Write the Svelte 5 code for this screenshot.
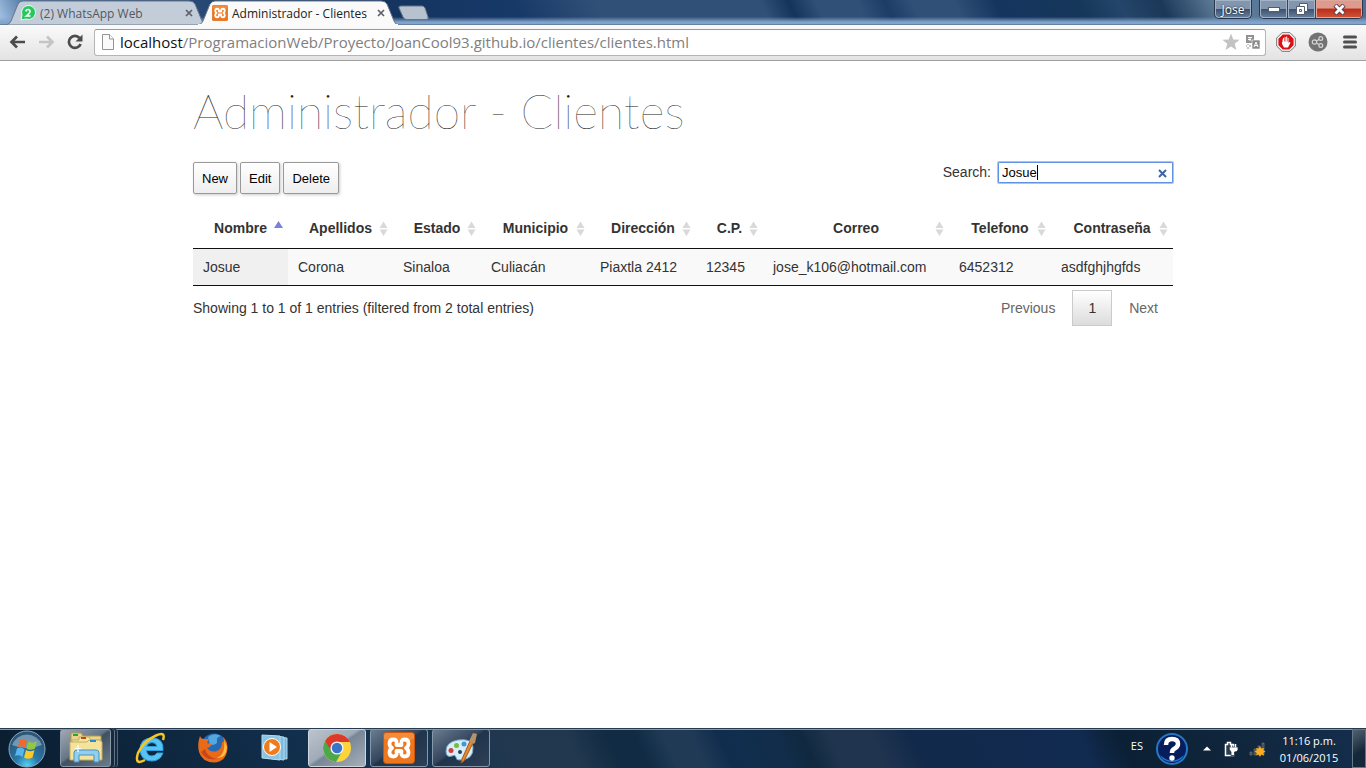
<script>
  const columns = [
    { name: 'Nombre', width: 95, value: 'Josue' },
    { name: 'Apellidos', width: 105, value: 'Corona' },
    { name: 'Estado', width: 88, value: 'Sinaloa' },
    { name: 'Municipio', width: 109, value: 'Culiacán' },
    { name: 'Dirección', width: 106, value: 'Piaxtla 2412' },
    { name: 'C.P.', width: 67, value: '12345' },
    { name: 'Correo', width: 186, value: 'jose_k106@hotmail.com' },
    { name: 'Telefono', width: 102, value: '6452312' },
    { name: 'Contraseña', width: 122, value: 'asdfghjhgfds' }
  ];
</script>

{#snippet closeGlyph()}
  <svg width="8" height="8" viewBox="0 0 8 8"><path d="M1 1L7 7M7 1L1 7" stroke="#5c6067" stroke-width="1.7" /></svg>
{/snippet}

{#snippet xampp(size)}
  <svg width={size} height={size} viewBox="0 0 32 32">
    <rect x="0.5" y="0.5" width="31" height="31" rx="3" fill="#ee761c" stroke="#c9560a" />
    <path d="M1 3Q1 1 3 1H29Q31 1 31 3V7Q16 11 1 7Z" fill="#f79a50" opacity=".6" />
    <path d="M13.500 13H18.500Q17.500 7.500 21.500 7.500Q25.500 7.500 25.500 11.500Q25.500 14.500 23 16Q25.500 17.500 25.500 20.500Q25.500 24.500 21.500 24.500Q17.500 24.500 18.500 19H13.500Q14.500 24.500 10.500 24.500Q6.500 24.500 6.500 20.500Q6.500 17.500 9 16Q6.500 14.500 6.500 11.500Q6.500 7.500 10.500 7.500Q14.500 7.500 13.500 13Z" fill="none" stroke="#fff" stroke-width="3.800" stroke-linejoin="round" />
  </svg>
{/snippet}

<div class="screen">
  <header>
    <div class="titlebar">
      <div class="tabs">
        <div class="tab">
          <svg class="shape" viewBox="0 0 200 25" preserveAspectRatio="none"><path d="M0 25Q4 24 5 21L12 4Q14 1 17 1H183Q187 1 189 4L196 21Q197 24 200 25Z" fill="#c3cdda" stroke="#66768b" /></svg>
          <svg width="16" height="16" viewBox="0 0 16 16"><path d="M1 15L2 10A7 7 0 1 1 6 14Z" fill="#25c85b" stroke="#edfbf1" /><path d="M6 6.500Q6 4.500 8 4.500T10 6.500Q10 8 6.300 11H10.500" fill="none" stroke="#fff" stroke-width="1.600" /></svg>
          <span class="tabtitle">(2) WhatsApp Web</span>
          <button aria-label="Cerrar WhatsApp Web">{@render closeGlyph()}</button>
        </div>
        <div class="tab active">
          <svg class="shape" viewBox="0 0 200 25" preserveAspectRatio="none"><path d="M0 25Q4 24 5 21L12 4Q14 1 17 1H183Q187 1 189 4L196 21Q197 24 200 25" fill="#fafafa" stroke="#66768b" /><path d="M0 25H200" stroke="#fafafa" stroke-width="2" /></svg>
          {@render xampp(16)}
          <span class="tabtitle">Administrador - Clientes</span>
          <button aria-label="Cerrar Administrador">{@render closeGlyph()}</button>
        </div>
        <button class="newtab" aria-label="Nueva pestaña"><svg width="32" height="16" viewBox="0 0 32 16"><path d="M3 1H24Q26 1 27 3L30 12Q31 14.500 28 14.500H9Q6 14.500 5 12L1 3Q0 1 3 1Z" fill="#b8c2ce" stroke="#62758e" /></svg></button>
      </div>
      <div class="wincontrols">
        <button class="user">Jose</button>
        <div class="wingroup">
          <button aria-label="Minimizar"><svg width="12" height="6" viewBox="0 0 12 6"><rect x=".5" y="1.500" width="11" height="4" fill="#fff" stroke="#525b70" /></svg></button>
          <button aria-label="Restaurar"><svg width="12" height="12" viewBox="0 0 12 12"><path d="M3.500.5H11.500V8.500H8.500V11.500H.5V3.500H3.500Z" fill="#fff" stroke="#525b70" /><path d="M3.500 6.500H5.500V8.500H3.500ZM8.500 8.500V3.500H3.500" fill="none" stroke="#525b70" /></svg></button>
          <button class="close" aria-label="Cerrar"><svg width="13" height="11" viewBox="0 0 13 11"><path d="M2 1L11 10M11 1L2 10" stroke="#5b3c48" stroke-width="4.600" /><path d="M2.500 1.500L10.500 9.500M10.500 1.500L2.500 9.500" stroke="#fff" stroke-width="2.800" /></svg></button>
        </div>
      </div>
    </div>
    <div class="toolbar">
      <button aria-label="Atrás"><svg width="17" height="14" viewBox="0 0 17 14"><path d="M8 1.500L2.500 7L8 12.500M3 7H16" fill="none" stroke="#4c4c4c" stroke-width="2.700" /></svg></button>
      <button class="forward" aria-label="Adelante"><svg width="17" height="14" viewBox="0 0 17 14"><path d="M9 1.500L14.500 7L9 12.500M1 7H14" fill="none" stroke="#c5c5c5" stroke-width="2.700" /></svg></button>
      <button class="reload" aria-label="Recargar"><svg width="17" height="16" viewBox="0 0 17 16"><path d="M12.500 4A6 6 0 1 0 13.600 10" fill="none" stroke="#4c4c4c" stroke-width="2.700" /><path d="M15.500.5V7.500H8.500Z" fill="#4c4c4c" /></svg></button>
      <div class="address">
        <svg width="14" height="16" viewBox="0 0 14 16"><path d="M1.500.5H8.500L12.500 5V15.500H1.500Z" fill="#fafafa" stroke="#949494" /><path d="M8.500.5V5H12.500" fill="#fff" stroke="#949494" /></svg>
        <span class="url"><b>localhost</b>/ProgramacionWeb/Proyecto/JoanCool93.github.io/clientes/clientes.html</span>
        <svg width="18" height="18" viewBox="0 0 18 18"><path d="M9 .5L11.300 6.500L17.600 6.800L12.700 10.700L14.400 17L9 13.400L3.600 17L5.300 10.700L.4 6.800L6.700 6.500Z" fill="#c3c3c3" /></svg>
        <svg class="translate" width="14" height="14" viewBox="0 0 14 14"><rect width="8" height="8" fill="#929292" /><path d="M2 2.500H6M4 2.500V6M2 4.500H5" stroke="#fff" fill="none" /><rect x="6" y="5" width="8" height="9" fill="#8c8c8c" stroke="#fff" stroke-width=".6" /><path d="M8 12L10 7L12 12M9 10.500H11.500" stroke="#fff" fill="none" /><path d="M0 11H1M2 9V10M2 12V14M3 11H5" stroke="#888" /></svg>
      </div>
      <button class="stop" aria-label="AdBlock"><svg width="20" height="20" viewBox="0 0 20 20"><path d="M6 .7H14L19.300 6V14L14 19.300H6L.7 14V6Z" fill="#fff" stroke="#707070" /><path d="M6.700 2.400H13.300L17.600 6.700V13.300L13.300 17.600H6.700L2.400 13.300V6.700Z" fill="#dc1014" /><path d="M6 7.500V12L8 15.500H12L14.500 10.500L13.500 10L12.500 11V6H11.700V9.500H11.200V4.600H10.200V9.500H9.600V5H8.600V9.500H8V6H7V10H6.500V7.500Z" fill="#fff" /></svg></button>
      <button class="share" aria-label="Compartir"><svg width="20" height="20" viewBox="0 0 20 20"><circle cx="10" cy="10" r="9.500" fill="#737373" /><g fill="none" stroke="#d5d5d5" stroke-width="1.200"><circle cx="6.500" cy="10" r="2.200" /><circle cx="12.800" cy="6.500" r="1.900" /><circle cx="12.800" cy="13.500" r="1.900" /><path d="M8.300 9L11 7.500M8.300 11L11 12.500" /></g></svg></button>
      <button class="menu" aria-label="Menú"><svg width="14" height="14" viewBox="0 0 14 14"><path d="M1.500 2H12.500M1.500 7H12.500M1.500 12H12.500" stroke="#505050" stroke-width="3" stroke-linecap="round" /></svg></button>
    </div>
  </header>

  <main>
    <h1>Administrador - Clientes</h1>
    <div class="tools">
      <div class="actions"><button>New</button><button>Edit</button><button>Delete</button></div>
      <div class="search">
        <label for="search">Search:</label>
        <div class="searchbox">
          <input id="search" type="text" value="Josue" />
          <span class="caret"></span>
          <button aria-label="Borrar"><svg width="9" height="9" viewBox="0 0 9 9"><path d="M1 1L8 8M8 1L1 8" stroke="#3c64a8" stroke-width="2" /></svg></button>
        </div>
      </div>
    </div>
    <table>
      <colgroup>{#each columns as c}<col style="width: {c.width}px" />{/each}</colgroup>
      <thead>
        <tr>
          {#each columns as c, i}
            <th>{c.name}<svg width="9" height="15" viewBox="0 0 9 15">
                {#if i === 0}<path d="M0 7L4.500 0L9 7Z" fill="#7a80e0" />{:else}<path d="M.5 7L4.500 .5L8.500 7ZM.5 8.500H8.500L4.500 15Z" fill="#d9d9d9" />{/if}
              </svg></th>
          {/each}
        </tr>
      </thead>
      <tbody><tr>{#each columns as c}<td>{c.value}</td>{/each}</tr></tbody>
    </table>
    <div class="foot">
      <span>Showing 1 to 1 of 1 entries (filtered from 2 total entries)</span>
      <nav><button>Previous</button><button class="current">1</button><button>Next</button></nav>
    </div>
  </main>

  <footer>
    <button class="start" aria-label="Inicio">
      <svg width="38" height="38" viewBox="0 0 38 38">
        <defs><radialGradient id="orb" cx="50%" cy="95%" r="80%"><stop offset="0" stop-color="#4fd4f5" /><stop offset=".4" stop-color="#2a78a8" /><stop offset="1" stop-color="#2b5678" /></radialGradient></defs>
        <circle cx="19" cy="19" r="18" fill="url(#orb)" stroke="#8aa9bd" />
        <path d="M4 15A16 16 0 0 1 34 15Q19 21 4 15Z" fill="#c9e0ee" opacity=".45" />
        <path d="M12 10Q15 8 19 11L17 18Q14 15 9.500 17Z" fill="#f1682c" /><path d="M20.500 11.500Q25 14 29 11L27 18.500Q22 21 18.500 18.500Z" fill="#94c83c" /><path d="M9 18.500Q13 16 16.500 19.500L14.500 27Q11 24 7 26Z" fill="#57b5ec" /><path d="M18 20Q22 22.500 26.500 20L24.500 27.500Q20 30 16 27.500Z" fill="#fdc927" />
      </svg>
    </button>
    <div class="apps">
      <button class="app open stack" aria-label="Explorador">
        <svg width="34" height="32" viewBox="0 0 34 32"><path d="M2 5V1H12L14 4H32V25H2Z" fill="#e9d68a" stroke="#b49b4c" /><path d="M4 3H9" stroke="#25a83a" stroke-width="2" /><path d="M10 5H20L22 8H32V26H3V8H10Z" fill="#f5e5a0" stroke="#c5ad60" /><path d="M12 6H17" stroke="#d13b2a" stroke-width="2" /><path d="M1 10H18L20 8H30L33 10V28H1Z" fill="#f4e39d" stroke="#c5ad60" /><path d="M21 9H27" stroke="#248bd0" stroke-width="2" /><path d="M5 30V21Q5 18 8 18H27Q30 18 30 21V30H25V23H10V30Z" fill="#91cff0" stroke="#4d91bb" /><path d="M9 13V20M6 16.500H12" stroke="#fff" stroke-width="1.200" /></svg>
      </button>
      <button class="app" aria-label="Internet Explorer">
        <svg width="32" height="32" viewBox="0 0 32 32"><path d="M28 18.500H11.500Q12 24 17 24Q20 24 22 21H28Q25 29 17 29Q6 29 5 18Q5 6 17 6Q29 6 28 18.500ZM11.500 14.500H22Q21 10.500 17 10.500T11.500 14.500Z" fill="#57c2f4" stroke="#2b9fda" /><path d="M28 8Q31-1 21 3.500Q9 9 3 21Q-1 34 10 28" fill="none" stroke="#f5c529" stroke-width="2.500" /></svg>
      </button>
      <button class="app" aria-label="Firefox">
        <svg width="32" height="32" viewBox="0 0 32 32"><circle cx="17" cy="14.500" r="13" fill="#2769b2" /><path d="M11 5Q17 0 24 4Q19 5 20 9T13 13Z" fill="#55a8df" /><path d="M3 4Q4 7 7 7L12 7L10 11L15 12.500Q12 16 10 16Q14 21 20 19Q25 17 25 10Q28 11 26 5Q31 9 30.500 17Q29 30 17 30.500Q5 30 2 20Q0 12 3 4Z" fill="#e96b19" /><path d="M27 8Q29 22 20 26Q29 27 30 15Z" fill="#ffbd40" /><path d="M4 20Q9 29 20 27Q10 25 8 17Z" fill="#c9461a" /></svg>
      </button>
      <button class="app" aria-label="Reproductor">
        <svg width="28" height="28" viewBox="0 0 28 28"><path d="M8 2L26 4V25L8 24Z" fill="#72b4dc" stroke="#b5d9ec" /><path d="M5 1.500L23 3V26L5 24Z" fill="#7cbce1" stroke="#b5d9ec" /><path d="M1 1L19 2V26L1 24Z" fill="#8ac5e5" stroke="#b5d9ec" /><circle cx="11" cy="13" r="8.500" fill="#ef7b1c" stroke="#fff" /><path d="M8.500 8L16 13L8.500 18Z" fill="#fff" /></svg>
      </button>
      <button class="app open lit" aria-label="Chrome">
        <svg width="30" height="30" viewBox="0 0 30 30"><circle cx="15" cy="15" r="14" fill="#fdd43b" /><path d="M15 15L8.500 19L3 8A14 14 0 0 1 27.800 9H15Z" fill="#dd382b" /><path d="M3 8A14 14 0 0 0 14 29L20.500 18L15 15L9.500 18Z" fill="#4ca848" /><circle cx="15" cy="15" r="6.600" fill="#f2f2f2" /><circle cx="15" cy="15" r="5.200" fill="#3774ca" /></svg>
      </button>
      <button class="app open" aria-label="XAMPP">{@render xampp(32)}</button>
      <button class="app open" aria-label="Paint">
        <svg width="34" height="32" viewBox="0 0 34 32"><path d="M14 8Q28 6 29 15Q30 28 15 28Q12 28 12 25Q11 22 8 24Q2 26 2 19Q2 10 14 8Z" fill="#d7edf8" stroke="#79a9c7" /><circle cx="7" cy="18.500" r="2.500" fill="#d23d34" /><circle cx="12.500" cy="13.500" r="2.500" fill="#78bb3e" /><circle cx="20" cy="12" r="2.500" fill="#4595d9" /><circle cx="16" cy="20" r="2" fill="#263f5e" /><path d="M29 11L20 29L17 31L18 27L26 9Z" fill="#e28a30" stroke="#a9571b" /><path d="M25 9L29 1L33 2L31 11Q28 13 25 9Z" fill="#b89168" /></svg>
      </button>
    </div>
    <div class="tray">
      <span class="lang">ES</span>
      <svg class="help" width="32" height="32" viewBox="0 0 32 32"><circle cx="16" cy="16" r="15" fill="#071d5c" stroke="#2678c6" stroke-width="2" /><path d="M4 22Q16 33 28 22Q25 29 16 29T4 22Z" fill="#1d78cf" /><path d="M10 12Q10 6 16 6T22 11Q22 14 18 16Q16 17 16 20" fill="none" stroke="#fff" stroke-width="4.500" /><circle cx="16" cy="25" r="2.700" fill="#fff" /></svg>
      <svg class="arrow" width="8" height="5" viewBox="0 0 8 5"><path d="M0 4.500L4 .5L8 4.500Z" fill="#fff" /></svg>
      <svg class="plug" width="15" height="16" viewBox="0 0 15 16"><path d="M1.500 3.500H3.500V1.500H6.500V3.500H9.500V14.500H1.500Z" fill="#2b3c4b" stroke="#fff" stroke-width="1.500" /><path d="M5 6H14V9Q13 11 10.500 11V14.500H7V11Q5 9 5 6Z" fill="#fff" stroke="#20303f" stroke-width=".8" /><path d="M7.500 3V6.500M11.500 3V6.500" stroke="#fff" stroke-width="1.500" /></svg>
      <svg width="17" height="16" viewBox="0 0 17 16"><path d="M1 11H3V14H1ZM5 8H7V14H5ZM9 5H11V14H9ZM13 2H15V14H13Z" fill="#35424c" stroke="#78838b" stroke-width=".6" /><path d="M11 5L12.300 7.500L15 7L14.300 9.300L16.500 10.500L14.300 12L15 14.500L12.300 13.500L11 16L9.700 13.500L7 14.500L7.700 12L5.500 10.500L7.700 9.300L7 7L9.700 7.500Z" fill="#ffad20" /></svg>
      <div class="clock"><span>11:16 p.m.</span><span>01/06/2015</span></div>
      <button class="desktop" aria-label="Mostrar escritorio"></button>
    </div>
  </footer>
</div>

<style>
  :global(body) { margin: 0; background: #fff; }
  * { box-sizing: border-box; }
  button { font: inherit; color: inherit; background: none; border: 0; padding: 0; display: flex; align-items: center; justify-content: center; flex-shrink: 0; }
  svg { display: block; flex-shrink: 0; }
  .screen { min-height: 100vh; display: flex; flex-direction: column; font-family: "Liberation Sans", Arial, sans-serif; }
  .titlebar {
    height: 25px; display: flex; justify-content: space-between; align-items: flex-start; border-bottom: 1px solid #66809f;
    background: linear-gradient(180deg, transparent 70%, #82a3cb 92%),
      linear-gradient(65deg, #a7c6e8 0, #446995 3%, #1d3c68 20%, #15345f 29%, #173968 38%, #315077 44%, #315077 56%, #15345b 58%, #315077 60%, #315077 63%, #1d3c66 65%, #315077 67%, #315077 70%, #153560 73%, #153759 79%, #24466a 82%, #1b3858 85%, #5d7c98 89%, #4d6e95 100%);
  }
  .tabs { display: flex; padding-left: 6px; }
  .tab { position: relative; width: 200px; height: 25px; padding: 1px 13px 0 14px; display: flex; align-items: center; gap: 4px; font-family: "Open Sans", sans-serif; font-size: 12px; color: #53585f; }
  .tab > * { position: relative; }
  .tab > .shape { position: absolute; inset: 0; width: 100%; height: 100%; }
  .tab + .tab { margin-left: -8px; }
  .active { color: #222; z-index: 1; }
  .tabtitle { flex: 1; min-width: 0; white-space: nowrap; }
  .newtab { margin-top: 5px; height: 16px; }
  .wincontrols { display: flex; gap: 7px; padding-right: 3px; color: #fff; }
  .user { height: 19px; width: 38px; font-family: "Open Sans", sans-serif; font-size: 12px; text-shadow: 0 0 2px #000; }
  .user, .wingroup { border: 1px solid #28374d; border-top: 0; border-radius: 0 0 5px 5px; box-shadow: inset 0 0 0 1px #a2b3c7; background: linear-gradient(#8496ae 48%, #3b506e 50%, #69819e); }
  .wingroup { display: flex; height: 19px; overflow: hidden; }
  .wingroup button { width: 28px; height: 18px; border-right: 1px solid #34445b; box-shadow: inset 0 0 0 1px #a2b3c7; }
  .wingroup .close { width: 46px; border: 0; background: linear-gradient(#dd9a8d 45%, #bb2c17 50%, #d0563a); box-shadow: inset 0 0 0 1px #dfa69c; }
  .toolbar { height: 36px; padding: 0 9px 1px; display: flex; align-items: center; background: linear-gradient(#fafafa, #e3e3e3); border-bottom: 1px solid #a0a0a0; }
  .forward { margin-left: 12px; }
  .reload { margin: 0 10px 0 12px; }
  .address { flex: 1; min-width: 0; height: 27px; display: flex; align-items: center; background: #fff; border: 1px solid #b5b5b5; border-top-color: #999; border-radius: 3px; padding: 0 5px 0 6px; }
  .url { flex: 1; min-width: 0; overflow: hidden; white-space: nowrap; margin-left: 5px; font-family: "Open Sans", sans-serif; font-size: 15px; color: #808080; }
  .url b { font-weight: 400; color: #111; }
  .translate { margin-left: 6px; }
  .stop { margin-left: 10px; }
  .share { margin-left: 12px; }
  .menu { margin-left: 15px; }

  main { flex: 1; width: 90%; max-width: 980px; margin: 0 auto; color: #333; font-size: 14px; }
  h1 { margin: 22px 0 23px; font-family: Lato, sans-serif; font-size: 48px; font-weight: 100; line-height: 56px; color: #222; white-space: nowrap; }
  .tools { display: flex; justify-content: space-between; align-items: flex-start; }
  .actions { display: flex; gap: 3px; }
  .actions button { height: 32px; padding: 0 8px; border: 1px solid #999; border-radius: 2px; font-size: 13px; color: #000; background: linear-gradient(#fff, #eee); box-shadow: 1px 1px 3px #ccc; }
  .search { display: flex; align-items: flex-start; gap: 7px; line-height: 21px; }
  .searchbox { position: relative; }
  input { display: block; width: 175px; height: 21px; padding: 0 24px 0 3px; border: 1px solid #5f92e2; border-radius: 1px; box-shadow: 0 0 0 1px #a9c5f2; outline: 0; font: inherit; font-size: 13px; color: #000; caret-color: transparent; }
  .searchbox .caret { position: absolute; left: 39px; top: 3px; width: 1px; height: 15px; background: #000; }
  .searchbox button { position: absolute; right: 6px; top: 7px; }
  table { width: 100%; margin-top: 14px; table-layout: fixed; border-collapse: separate; border-spacing: 0; border-bottom: 1px solid #111; }
  th { position: relative; height: 41px; padding: 0; border-bottom: 1px solid #111; text-align: center; }
  th svg { position: absolute; right: 5px; top: 13px; }
  td { height: 36px; padding: 0 10px; background: #f9f9f9; white-space: nowrap; }
  td:first-child { background: #f0f0f0; }
  .foot { display: flex; justify-content: space-between; align-items: center; padding-top: 4px; }
  nav { display: flex; gap: 2px; color: #666; }
  nav button { height: 36px; padding: 0 15px; }
  .current { border: 1px solid #cacaca; background: linear-gradient(#fff, #dcdcdc); color: #333; }

  footer {
    height: 40px; display: flex; color: #fff; border-top: 1px solid #263b51; box-shadow: inset 0 1px #809bb0;
    background: linear-gradient(65deg, #0b1e30 0, #102b46 18%, #12304f 24%, #1b3650 34%, #22384f 38%, #22384f 42%, #102b43 45%, #102b43 47%, #203a56 49%, #203a56 51%, #112d4e 53%, #122d4b 57%, #102940 59%, #20344f 61%, #20344f 64%, #11294a 67%, #112a50 79%, #0b2034 82%, #10263c 90%, #142e4d 100%);
  }
  .start { width: 54px; height: 39px; }
  .apps { display: flex; gap: 4px; padding: 0 0 0 6px; }
  .app { width: 58px; height: 38px; }
  .open { border: 1px solid #8798ab; border-radius: 3px; background: linear-gradient(145deg, #6b7c90, #34475e 45%, #20344c 50%, #2d4057); }
  .lit { border-color: #d0d6dd; background: linear-gradient(145deg, #bbc3cd, #a0abb8 45%, #788696 50%, #a5afba); }
  .stack { width: 51px; margin-right: 7px; background: linear-gradient(145deg, #a1a9b1, #667584 45%, #3f5060 50%, #6e7c88); box-shadow: 3px 0 #17293c, 4px 0 #62758b, 6px 0 #17293c, 7px 0 #536579; }
  .tray { display: flex; align-items: center; margin-left: auto; }
  .tray, .clock { font-family: "Open Sans", sans-serif; font-size: 11px; }
  .lang { margin: 0 13px 6px 0; }
  .arrow { margin: 0 13px 0 15px; }
  .plug { margin-right: 10px; }
  .clock { width: 86px; display: flex; flex-direction: column; align-items: center; line-height: 17px; }
  .desktop { width: 14px; height: 39px; border: 1px solid #667789; background: linear-gradient(150deg, #53616d, #15283a 60%); }
</style>
